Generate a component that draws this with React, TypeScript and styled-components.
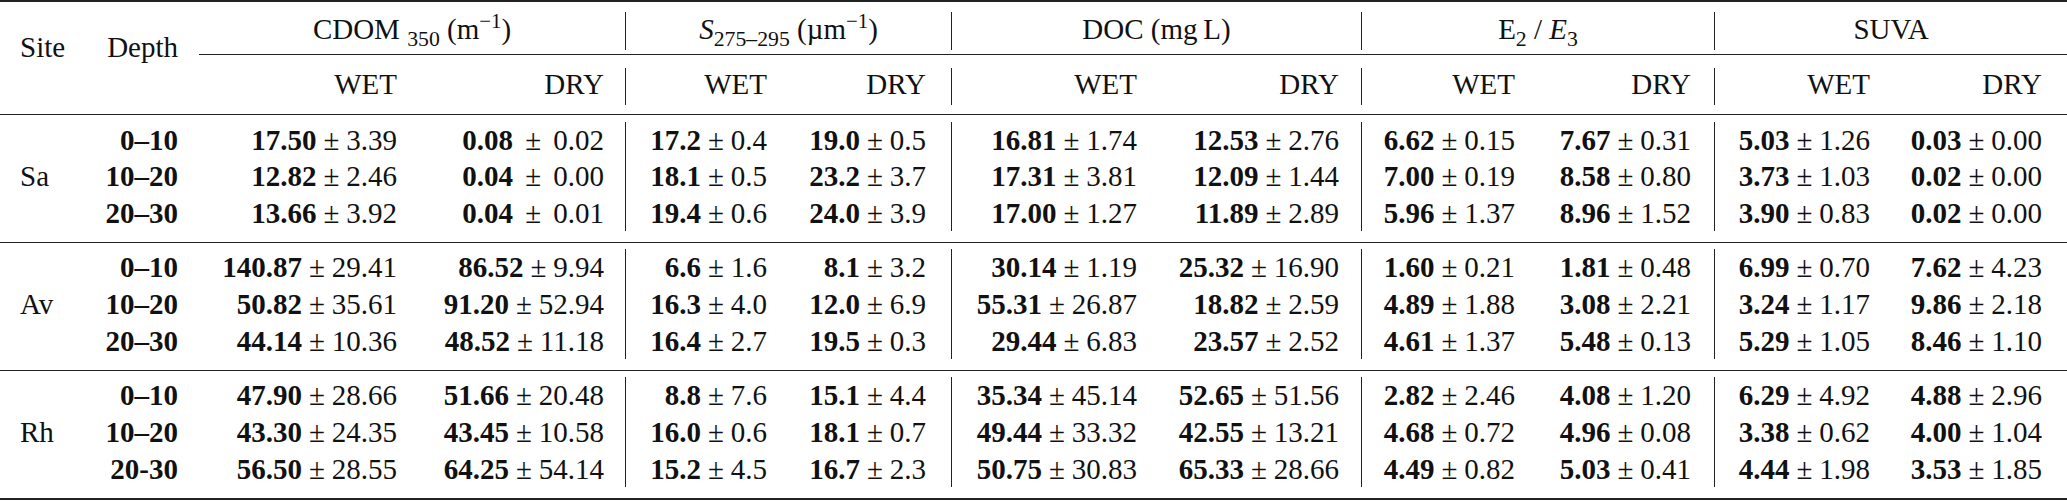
import React from 'react';
import styled, { createGlobalStyle, css } from 'styled-components';

const GlobalStyle = createGlobalStyle`
  body {
    margin: 0;
    background: #ffffff;
    font-family: "Liberation Serif", "Times New Roman", serif;
  }
`;

const COLS = '90px 88px 219px 229px 141px 185px 185px 225px 153px 200px 155px 197px';
const RULE = '#222222';

// right padding for each column (index = column number - 1)
const PAD = [0, 0, 0, 21, 0, 25, 0, 22, 0, 23, 0, 25];
// columns that end a group and carry a vertical bar
const BAR = [false, false, false, true, false, true, false, true, false, true, false, false];

const Table = styled.div`
  font-family: "Liberation Serif", "Times New Roman", serif;
  color: #111;
  width: 2067px;
  font-size: 29px;
  border-top: 2px solid ${RULE};
  border-bottom: 2px solid ${RULE};
`;

const HeaderGrid = styled.div`
  display: grid;
  grid-template-columns: ${COLS};
  grid-template-rows: 38px 18px 37px;
  padding: 10px 0 9px;
  border-bottom: 1.3px solid ${RULE};
`;

const StubHead = styled.div<{ $align: 'left' | 'right'; $col: number }>`
  grid-row: 1 / 4;
  grid-column: ${(p) => p.$col};
  padding-top: 19px;
  line-height: 32px;
  text-align: ${(p) => p.$align};
  padding-left: ${(p) => (p.$align === 'left' ? '20px' : '0')};
  white-space: nowrap;
`;

const GroupHead = styled.div<{ $col: number; $bar: boolean; $indent?: number }>`
  grid-row: 1;
  grid-column: ${(p) => p.$col} / span 2;
  line-height: 35px;
  text-align: center;
  white-space: nowrap;
  padding-left: ${(p) => p.$indent ?? 0}px;
  ${(p) =>
    p.$bar &&
    css`
      border-right: 1px solid ${RULE};
    `}
`;

const CmidRule = styled.div`
  grid-row: 2;
  grid-column: 3 / -1;
  align-self: start;
  margin-top: 4px;
  margin-left: 21px;
  border-top: 1.3px solid ${RULE};
`;

const SubHead = styled.div<{ $pad: number; $bar: boolean }>`
  grid-row: 3;
  line-height: 32px;
  text-align: right;
  padding-right: ${(p) => p.$pad}px;
  white-space: nowrap;
  ${(p) =>
    p.$bar &&
    css`
      border-right: 1px solid ${RULE};
    `}
`;

const Section = styled.div<{ $last?: boolean }>`
  display: grid;
  grid-template-columns: ${COLS};
  grid-template-rows: repeat(3, 36.67px);
  padding: 6.5px 0 10.5px;
  line-height: 36.67px;
  ${(p) =>
    !p.$last &&
    css`
      border-bottom: 1.3px solid ${RULE};
    `}
`;

const SiteCell = styled.div`
  grid-column: 1;
  grid-row: 2;
  padding-left: 20px;
  white-space: nowrap;
`;

const DepthCell = styled.div`
  grid-column: 2;
  text-align: right;
  font-weight: 700;
  white-space: nowrap;
`;

const ValueCell = styled.div<{ $pad: number; $bar: boolean }>`
  text-align: right;
  white-space: nowrap;
  padding-right: ${(p) => p.$pad}px;
  ${(p) =>
    p.$bar &&
    css`
      border-right: 1px solid ${RULE};
    `}
`;

const Mean = styled.b`
  font-weight: 700;
`;

const Pm = styled.span<{ $wide?: boolean }>`
  margin: 0 ${(p) => (p.$wide ? '0.42em' : '0.24em')};
`;

const Sub = styled.span`
  font-size: 0.75em;
  vertical-align: -0.32em;
  line-height: 0;
`;

const Sup = styled.span`
  font-size: 0.72em;
  vertical-align: 0.55em;
  line-height: 0;
`;

const Ital = styled.i`
  font-style: italic;
`;

type Value = [string, string];

interface Block {
  site: string;
  rows: { depth: string; values: Value[] }[];
  wide?: number[];
}

const DATA: Block[] = [
  {
    site: 'Sa',
    wide: [1],
    rows: [
      {
        depth: '0–10',
        values: [
          ['17.50', '3.39'], ['0.08', '0.02'], ['17.2', '0.4'], ['19.0', '0.5'], ['16.81', '1.74'],
          ['12.53', '2.76'], ['6.62', '0.15'], ['7.67', '0.31'], ['5.03', '1.26'], ['0.03', '0.00'],
        ],
      },
      {
        depth: '10–20',
        values: [
          ['12.82', '2.46'], ['0.04', '0.00'], ['18.1', '0.5'], ['23.2', '3.7'], ['17.31', '3.81'],
          ['12.09', '1.44'], ['7.00', '0.19'], ['8.58', '0.80'], ['3.73', '1.03'], ['0.02', '0.00'],
        ],
      },
      {
        depth: '20–30',
        values: [
          ['13.66', '3.92'], ['0.04', '0.01'], ['19.4', '0.6'], ['24.0', '3.9'], ['17.00', '1.27'],
          ['11.89', '2.89'], ['5.96', '1.37'], ['8.96', '1.52'], ['3.90', '0.83'], ['0.02', '0.00'],
        ],
      },
    ],
  },
  {
    site: 'Av',
    rows: [
      {
        depth: '0–10',
        values: [
          ['140.87', '29.41'], ['86.52', '9.94'], ['6.6', '1.6'], ['8.1', '3.2'], ['30.14', '1.19'],
          ['25.32', '16.90'], ['1.60', '0.21'], ['1.81', '0.48'], ['6.99', '0.70'], ['7.62', '4.23'],
        ],
      },
      {
        depth: '10–20',
        values: [
          ['50.82', '35.61'], ['91.20', '52.94'], ['16.3', '4.0'], ['12.0', '6.9'], ['55.31', '26.87'],
          ['18.82', '2.59'], ['4.89', '1.88'], ['3.08', '2.21'], ['3.24', '1.17'], ['9.86', '2.18'],
        ],
      },
      {
        depth: '20–30',
        values: [
          ['44.14', '10.36'], ['48.52', '11.18'], ['16.4', '2.7'], ['19.5', '0.3'], ['29.44', '6.83'],
          ['23.57', '2.52'], ['4.61', '1.37'], ['5.48', '0.13'], ['5.29', '1.05'], ['8.46', '1.10'],
        ],
      },
    ],
  },
  {
    site: 'Rh',
    rows: [
      {
        depth: '0–10',
        values: [
          ['47.90', '28.66'], ['51.66', '20.48'], ['8.8', '7.6'], ['15.1', '4.4'], ['35.34', '45.14'],
          ['52.65', '51.56'], ['2.82', '2.46'], ['4.08', '1.20'], ['6.29', '4.92'], ['4.88', '2.96'],
        ],
      },
      {
        depth: '10–20',
        values: [
          ['43.30', '24.35'], ['43.45', '10.58'], ['16.0', '0.6'], ['18.1', '0.7'], ['49.44', '33.32'],
          ['42.55', '13.21'], ['4.68', '0.72'], ['4.96', '0.08'], ['3.38', '0.62'], ['4.00', '1.04'],
        ],
      },
      {
        depth: '20-30',
        values: [
          ['56.50', '28.55'], ['64.25', '54.14'], ['15.2', '4.5'], ['16.7', '2.3'], ['50.75', '30.83'],
          ['65.33', '28.66'], ['4.49', '0.82'], ['5.03', '0.41'], ['4.44', '1.98'], ['3.53', '1.85'],
        ],
      },
    ],
  },
];

const GROUPS: { col: number; label: React.ReactNode; indent?: number }[] = [
  {
    col: 3,
    indent: 21,
    label: (
      <>
        CDOM <Sub>350</Sub> (m<Sup>−1</Sup>)
      </>
    ),
  },
  {
    col: 5,
    label: (
      <>
        <Ital>S</Ital>
        <Sub>275–295</Sub> (µm<Sup>−1</Sup>)
      </>
    ),
  },
  { col: 7, label: <>DOC (mg{'\u2009'}L)</> },
  {
    col: 9,
    label: (
      <>
        E<Sub>2</Sub> / <Ital>E</Ital>
        <Sub>3</Sub>
      </>
    ),
  },
  { col: 11, label: <>SUVA</> },
];

const VALUE_COLS = [2, 3, 4, 5, 6, 7, 8, 9, 10, 11];

export default function App() {
  return (
    <>
      <GlobalStyle />
      <Table>
        <HeaderGrid>
          <StubHead $col={1} $align="left">
            Site
          </StubHead>
          <StubHead $col={2} $align="right">
            Depth
          </StubHead>
          {GROUPS.map((g) => (
            <GroupHead key={g.col} $col={g.col} $bar={BAR[g.col]} $indent={g.indent}>
              {g.label}
            </GroupHead>
          ))}
          <CmidRule />
          {VALUE_COLS.map((c) => (
            <SubHead key={c} $pad={PAD[c]} $bar={BAR[c]} style={{ gridColumn: c + 1 }}>
              {c % 2 === 0 ? 'WET' : 'DRY'}
            </SubHead>
          ))}
        </HeaderGrid>
        {DATA.map((block, bi) => (
          <Section key={block.site} $last={bi === DATA.length - 1}>
            <SiteCell>{block.site}</SiteCell>
            {block.rows.map((row) => (
              <React.Fragment key={row.depth}>
                <DepthCell>{row.depth}</DepthCell>
                {row.values.map(([m, sd], vi) => {
                  const c = VALUE_COLS[vi];
                  return (
                    <ValueCell key={vi} $pad={PAD[c]} $bar={BAR[c]}>
                      <Mean>{m}</Mean>
                      <Pm $wide={block.wide?.includes(vi)}>±</Pm>
                      {sd}
                    </ValueCell>
                  );
                })}
              </React.Fragment>
            ))}
          </Section>
        ))}
      </Table>
    </>
  );
}
